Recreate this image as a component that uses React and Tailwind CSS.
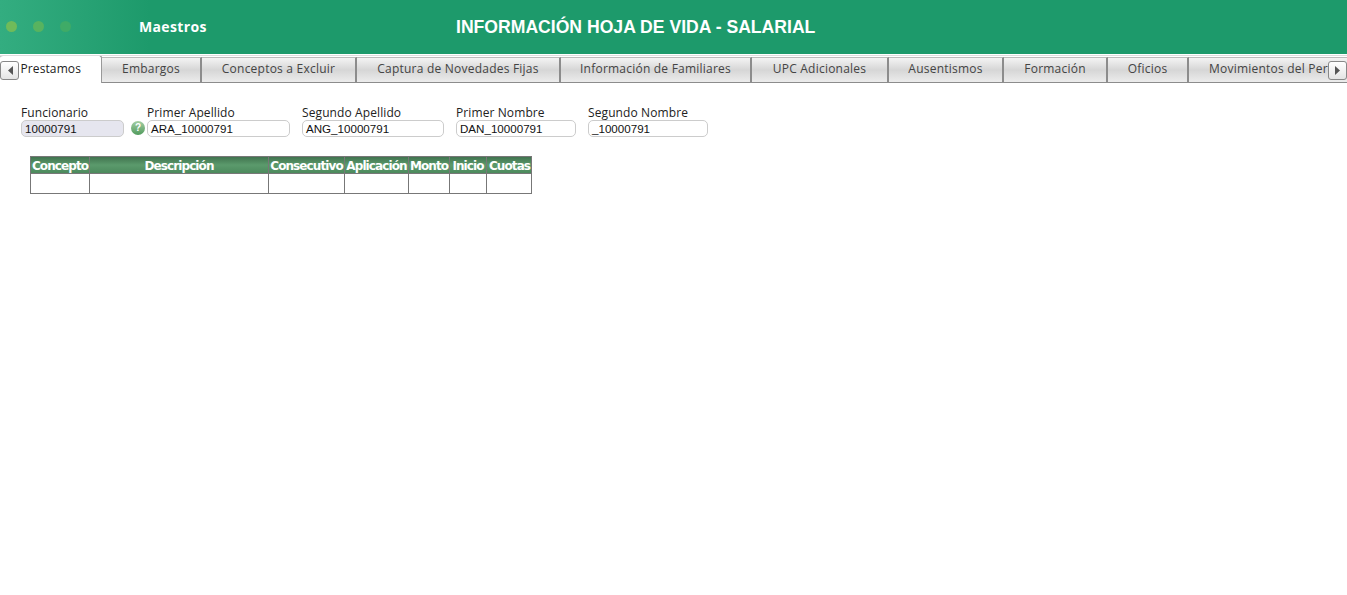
const tabs = [
  { label: 'Embargos', width: 'w-[100px]' },
  { label: 'Conceptos a Excluir', width: 'w-[155px]' },
  { label: 'Captura de Novedades Fijas', width: 'w-[204px]' },
  { label: 'Información de Familiares', width: 'w-[191px]' },
  { label: 'UPC Adicionales', width: 'w-[137px]' },
  { label: 'Ausentismos', width: 'w-[115px]' },
  { label: 'Formación', width: 'w-[104px]' },
  { label: 'Oficios', width: 'w-[81px]' },
  { label: 'Movimientos del Personal', width: 'w-[192px]' },
];

const fields = [
  { label: 'Primer Apellido', value: 'ARA_10000791', width: 'w-[143px]' },
  { label: 'Segundo Apellido', value: 'ANG_10000791', width: 'w-[142px]' },
  { label: 'Primer Nombre', value: 'DAN_10000791', width: 'w-[120px]' },
  { label: 'Segundo Nombre', value: '_10000791', width: 'w-[120px]' },
];

const columns = [
  { label: 'Concepto', width: 'w-[59px]' },
  { label: 'Descripción', width: 'w-[179px]' },
  { label: 'Consecutivo', width: 'w-[76px]' },
  { label: 'Aplicación', width: 'w-[64px]' },
  { label: 'Monto', width: 'w-[41px]' },
  { label: 'Inicio', width: 'w-[37px]' },
  { label: 'Cuotas', width: 'w-[45px]' },
];

function Field({ label, value, width, disabled }) {
  return (
    <div className={`${width} shrink-0`}>
      <div className="h-[15px] text-[12px] leading-[15px] tracking-[0.1px] text-[#222] font-['Open_Sans',sans-serif]">{label}</div>
      <div className={`flex h-[17px] items-center rounded-[5px] border border-[#ccc] pl-[3px] text-[11.6px] text-[#111] font-['Liberation_Sans',sans-serif] ${disabled ? 'bg-[#e6e6ef]' : 'bg-white'}`}>
        {value}
      </div>
    </div>
  );
}

function ScrollButton({ direction }) {
  return (
    <div className="flex h-[19px] w-[19px] items-center justify-center rounded-[3px] border border-[#888] bg-gradient-to-b from-white to-[#e4e4e4]">
      <svg width="6" height="9" viewBox="0 0 6 9">
        <path d={direction === 'left' ? 'M6 0V9L1 4.5Z' : 'M0 0V9L5 4.5Z'} fill="#555" />
      </svg>
    </div>
  );
}

export default function App() {
  return (
    <div className="h-[595px] w-[1347px] overflow-hidden bg-white">
      <header className="relative flex h-[54px] items-center overflow-hidden bg-[#1d9a6b]">
        <div className="absolute inset-y-0 left-0 w-[150px] bg-gradient-to-r from-[#33ad80] to-[#1d9a6b]" />
        <div className="relative mb-[2px] ml-[6px] flex w-[133px] items-center gap-[16px]">
          <span className="h-[11px] w-[11px] rounded-full bg-[#6fbb5a]" />
          <span className="h-[11px] w-[11px] rounded-full bg-[#58b35f]" />
          <span className="h-[11px] w-[11px] rounded-full bg-[#3fab67]" />
        </div>
        <div className="relative mb-[2px] w-[317px] text-[14px] font-bold tracking-[0.35px] text-white font-['Open_Sans',sans-serif]">Maestros</div>
        <h1 className="relative mt-[1px] text-[17.6px] font-bold text-white font-['Liberation_Sans',sans-serif]">INFORMACIÓN HOJA DE VIDA - SALARIAL</h1>
      </header>

      <nav className="relative mt-px flex h-[28px] items-end overflow-hidden border-t border-[#ddd]">
        <div className="z-10 flex h-[28px] w-[102px] shrink-0 items-center justify-end rounded-t-[3px] border-r border-t border-[#999] bg-white pb-[2px] pr-[20px] text-[12px] tracking-[0.1px] text-[#222] font-['Open_Sans',sans-serif]">
          Prestamos
        </div>
        {tabs.map((tab) => (
          <div
            key={tab.label}
            className={`${tab.width} flex h-[26px] shrink-0 items-center justify-center whitespace-nowrap border-b border-r-2 border-t border-[#8c8c8c] border-t-[#bbb] bg-gradient-to-b from-[#f4f4f4] via-[#d6d6d6] to-[#ececec] pb-[2px] text-[12px] tracking-[0.22px] text-[#444] font-['Open_Sans',sans-serif]`}
          >
            {tab.label}
          </div>
        ))}
        <div className="absolute left-0 top-[5px] z-20">
          <ScrollButton direction="left" />
        </div>
        <div className="absolute right-0 top-[5px] z-20">
          <ScrollButton direction="right" />
        </div>
      </nav>

      <main className="pl-[21px] pt-[22px]">
        <div className="flex items-end">
          <Field label="Funcionario" value="10000791" width="w-[103px]" disabled />
          <div className="mb-[2px] ml-[7px] mr-[2px] flex h-[14px] w-[14px] items-center justify-center rounded-full bg-gradient-to-b from-[#a5cfa5] to-[#4f9a5c] text-[10px] font-bold leading-none text-white font-['Liberation_Sans',sans-serif]">?</div>
          <div className="flex gap-[12px]">
            {fields.map((field) => (
              <Field key={field.label} {...field} />
            ))}
          </div>
        </div>

        <div className="ml-[9px] mt-[19px] w-[502px]">
          <div className="flex h-[18px] border border-[#777] bg-gradient-to-b from-[#41744f] via-[#5b9a6c] to-[#4c8a5d]">
            {columns.map((col, i) => (
              <div
                key={col.label}
                className={`${col.width} ${i < columns.length - 1 ? 'border-r border-[#777]' : ''} flex shrink-0 items-center justify-center pt-px text-[12px] font-bold tracking-[-0.9px] text-white font-['DejaVu_Sans',sans-serif]`}
              >
                {col.label}
              </div>
            ))}
          </div>
          <div className="flex h-[20px] border border-t-0 border-[#777]">
            {columns.map((col, i) => (
              <div key={col.label} className={`${col.width} ${i < columns.length - 1 ? 'border-r border-[#777]' : ''} shrink-0`} />
            ))}
          </div>
        </div>
      </main>
    </div>
  );
}
